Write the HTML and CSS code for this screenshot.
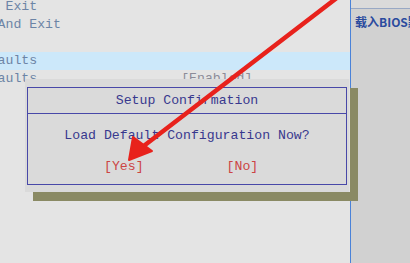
FILE: index.html
```html
<!DOCTYPE html>
<html lang="en">
<head>
  <meta charset="UTF-8">
  <title>BIOS Setup - Load Defaults</title>
  <link rel="stylesheet" href="styles.css">
</head>
<body>
  <div class="screen">
    <div class="menu">
      <div class="menu-list">
        <div class="row">Save Changes and Exit</div>
        <div class="row">Discard Changes And Exit</div>
        <div class="row"> </div>
        <div class="row selected">Load Optimal Defaults</div>
        <div class="row">Restore User Defaults<span class="value">[Enabled]</span></div>
      </div>
    </div>

    <aside class="help">
      <div class="help-top"></div>
      <div class="help-title">载入BIOS默认设置</div>
    </aside>

    <div class="dialog">
      <div class="dialog-frame">
        <div class="dialog-title">Setup Confirmation</div>
        <div class="dialog-body">
          <p class="question">Load Default Configuration Now?</p>
          <div class="choices">
            <span class="choice">[Yes]</span>
            <span class="choice">[No]</span>
          </div>
        </div>
      </div>
    </div>

    <!-- red pointer drawn over the screenshot -->
    <svg class="arrow" width="410" height="263" viewBox="0 0 410 263">
      <line x1="338" y1="-3" x2="145" y2="145" stroke="#e8221c" stroke-width="4.5" stroke-linecap="round"/>
      <polygon points="129,160 133,137 152,151" fill="#e8221c" stroke="#e8221c" stroke-width="2" stroke-linejoin="round"/>
    </svg>
  </div>
</body>
</html>
```

FILE: styles.css
```css
body {
  margin: 0;
  background-color: #e4e4e4;
  font-family: "Liberation Mono", monospace;
}
.screen {
  position: relative;
  display: grid;
  grid-template-columns: 350px 60px;
  width: 410px;
  height: 263px;
  overflow: hidden;
}
.menu {
  overflow: hidden;
  background-color: #e4e4e4;
}
.menu-list {
  margin-left: -129px;
  margin-top: -2px;
  width: 479px;
}
.row {
  height: 18px;
  line-height: 18px;
  font-size: 13.2px;
  color: #6c84a6;
  white-space: pre;
}
.row.selected {
  background-color: #cce8fa;
}
.value {
  margin-left: 144px;
  color: #8c8c98;
}
.help {
  background-color: #d1d1d1;
  border-left: 1px solid #4a82d8;
  overflow: hidden;
}
.help-top {
  height: 8px;
  background-color: #dadada;
  border-bottom: 1px solid #98a8c4;
}
.help-title {
  padding: 5px 0 0 4px;
  font-family: "Noto Sans CJK SC", sans-serif;
  font-weight: bold;
  font-size: 12px;
  line-height: 16px;
  color: #2b4b9e;
  white-space: nowrap;
}
.dialog {
  position: absolute;
  left: 25px;
  top: 79px;
  width: 325px;
  height: 113px;
  padding: 8px 2px 0 2px;
  box-sizing: border-box;
  background-color: #dadada;
  border-right: 1px solid #e2e2e2;
  box-shadow: 8px 9px 0 #8a8a64;
}
.dialog-frame {
  border: 1px solid #4848a8;
  height: 98px;
  box-sizing: border-box;
  color: #38388e;
  font-size: 13.2px;
}
.dialog-title {
  height: 25px;
  line-height: 25px;
  text-align: center;
  border-bottom: 1px solid #4848a8;
}
.dialog-body {
  padding-top: 13px;
}
.question {
  margin: 0;
  height: 18px;
  line-height: 18px;
  text-align: center;
}
.choices {
  display: flex;
  gap: 83px;
  margin-top: 13px;
  padding-left: 76px;
  height: 18px;
  line-height: 18px;
}
.choice {
  color: #cc4444;
}
.arrow {
  position: absolute;
  left: 0;
  top: 0;
}
```
